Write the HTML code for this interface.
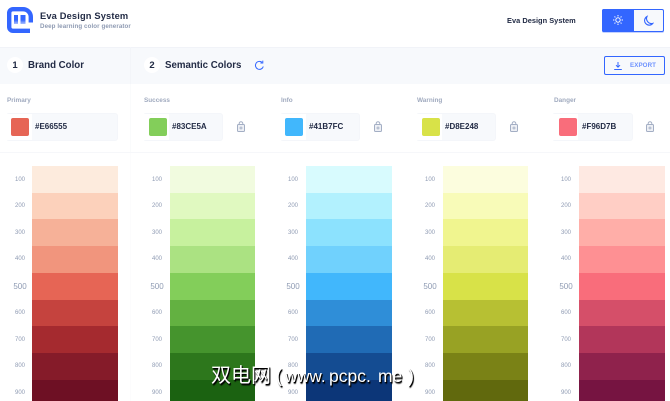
<!DOCTYPE html>
<html><head><meta charset="utf-8">
<style>
html,body{margin:0;padding:0;background:#fff}
#p{position:relative;width:670px;height:401px;overflow:hidden;background:#fff;font-family:"Liberation Sans",sans-serif;color:#222b45}
#p div,#p span,#p svg{position:absolute}
.t{white-space:nowrap;line-height:1}
.lab{font-size:6.4px;color:#8f9bb3;font-weight:700;top:98px;opacity:.85}
.box{top:114px;height:26px;background:#f7f9fc;border-radius:2px;box-shadow:0 0 0 1px #f4f6fa}
.sw{top:118px;width:18px;height:18px;border-radius:2px}
.hex{top:123px;font-size:8px;font-weight:700;color:#222b45}
.n{font-size:6px;color:#8f9bb3;width:24px;text-align:center;margin-top:1px}
.c{border-radius:50%;background:#fff;width:16px;height:16px;top:57px;font-size:9.5px;font-weight:700;text-align:center;line-height:17px}
.h{top:61px;font-size:9.7px;font-weight:700;color:#222b45}
.w{color:#fff;text-shadow:1px 1px 0 #000,1px 2px 1px rgba(0,0,0,.8);white-space:nowrap;line-height:1}
</style></head><body><div id="p">

<div style="left:0;top:47px;width:670px;height:37px;background:#f7f9fc;border-top:1px solid #f1f3f8;box-sizing:border-box"></div>
<div style="left:130px;top:47px;width:1px;height:37px;background:#f3f5f9"></div>
<div style="left:130px;top:84px;width:1px;height:68px;background:#fafbfc"></div>
<div style="left:0;top:152px;width:670px;height:1px;background:#f6f7fa"></div>
<div style="left:130px;top:153px;width:1px;height:248px;background:#fcfcfd"></div>

<svg style="left:7px;top:7px" width="27" height="27" viewBox="0 0 27 27">
<defs><linearGradient id="g" x1="0" y1="0" x2="0" y2="1"><stop offset="0" stop-color="#3366ff"/><stop offset=".55" stop-color="#3366ff"/><stop offset="1" stop-color="#a9bfff"/></linearGradient></defs>
<path d="M23.8 15.5V10A7.8 7.8 0 0 0 16 2.2H6A3.8 3.8 0 0 0 2.2 6V20A3.8 3.8 0 0 0 6 23.8H23" fill="none" stroke="#3366ff" stroke-width="4.4"/>
<rect x="7" y="8" width="4" height="9" fill="url(#g)"/><rect x="13.5" y="8" width="5" height="9" fill="url(#g)"/>
</svg>
<div class="t" style="left:40px;top:12px;font-size:9.3px;font-weight:700;letter-spacing:.15px">Eva Design System</div>
<div class="t" style="left:40px;top:24px;font-size:6.2px;font-weight:700;color:#8f9bb3;letter-spacing:.1px">Deep learning color generator</div>
<div class="t" style="left:507px;top:17px;font-size:7.4px;font-weight:700;color:#222b45;letter-spacing:.03px">Eva Design System</div>

<div style="left:602px;top:9px;width:62px;height:23px;box-sizing:border-box;border:1px solid #3366ff;border-radius:2px;background:#f7f9fc;box-shadow:0 1px 0 #c3d1ff"></div>
<div style="left:602px;top:9px;width:32px;height:23px;background:#3366ff;border-radius:2px 0 0 2px"></div>
<svg style="left:612px;top:14px" width="12" height="12" viewBox="0 0 12 12" fill="none" stroke="#fff" stroke-width="1">
<circle cx="6" cy="6" r="2.2"/><path d="M6 1V2.4M6 9.6V11M1 6H2.4M9.6 6H11M2.5 2.5L3.4 3.4M8.6 8.6L9.5 9.5M2.5 9.5L3.4 8.6M8.6 3.4L9.5 2.5"/></svg>
<svg style="left:642px;top:15px" width="12" height="12" viewBox="0 0 12 12" fill="none" stroke="#3366ff" stroke-width="1.1">
<path d="M5 1.5A4.6 4.6 0 1 0 10.8 8.4A5 5 0 0 1 5 1.5Z"/></svg>

<div class="c" style="left:7px">1</div>
<div class="t h" style="left:28px">Brand Color</div>
<div class="c" style="left:144px">2</div>
<div class="t h" style="left:165px">Semantic Colors</div>
<svg style="left:254px;top:60px" width="11" height="11" viewBox="0 0 11 11" fill="none" stroke="#3366ff" stroke-width="1">
<path d="M9.3 6.5A4 4 0 1 1 8 2.3"/><path d="M8.8 .6V3H6.4" /></svg>

<div style="left:604px;top:56px;width:61px;height:19px;box-sizing:border-box;border:1px solid #3366ff;border-radius:2px"></div>
<svg style="left:613px;top:61px" width="10" height="10" viewBox="0 0 10 10" fill="none" stroke="#3366ff" stroke-width="1">
<path d="M5 1V6M3 4.2L5 6.2L7 4.2M1.2 8.5H8.8"/></svg>
<div class="t" style="left:630px;top:62px;padding-top:0;font-size:6.2px;line-height:6px;font-weight:700;color:#3366ff;opacity:.7;letter-spacing:.1px;transform:translateY(1px)">EXPORT</div>

<div class="t lab" style="left:7px">Primary</div>
<div class="box" style="left:7px;width:110px"></div><div style="left:6px;top:114px;width:26px;height:26px;background:#fff"></div>
<div class="sw" style="left:11px;background:#e66555"></div><div class="t hex" style="left:35px">#E66555</div>

<div class="t lab" style="left:144px">Success</div>
<div class="box" style="left:144px;width:78px"></div><div style="left:143px;top:114px;width:26px;height:26px;background:#fff"></div>
<div class="sw" style="left:149px;background:#83ce5a"></div><div class="t hex" style="left:172px">#83CE5A</div>

<div class="t lab" style="left:281px">Info</div>
<div class="box" style="left:281px;width:78px"></div><div style="left:280px;top:114px;width:26px;height:26px;background:#fff"></div>
<div class="sw" style="left:285px;background:#41b7fc"></div><div class="t hex" style="left:309px">#41B7FC</div>

<div class="t lab" style="left:417px">Warning</div>
<div class="box" style="left:417px;width:78px"></div><div style="left:416px;top:114px;width:26px;height:26px;background:#fff"></div>
<div class="sw" style="left:422px;background:#d8e248"></div><div class="t hex" style="left:445px">#D8E248</div>

<div class="t lab" style="left:554px">Danger</div>
<div class="box" style="left:553px;width:79px"></div><div style="left:552px;top:114px;width:26px;height:26px;background:#fff"></div>
<div class="sw" style="left:559px;background:#f96d7b"></div><div class="t hex" style="left:582px">#F96D7B</div>

<svg style="left:236px;top:121px" width="10" height="11" viewBox="0 0 10 11" fill="#eef0f5" stroke="#a3aec4"><rect x="1.5" y="3.5" width="7" height="7" rx="1"/><path d="M3.2 3.5V2.5A1.8 1.8 0 0 1 6.8 2.5V3.5" fill="none"/><circle cx="5" cy="7" r="1" fill="none" stroke-width=".8"/></svg>
<svg style="left:373px;top:121px" width="10" height="11" viewBox="0 0 10 11" fill="#eef0f5" stroke="#a3aec4"><rect x="1.5" y="3.5" width="7" height="7" rx="1"/><path d="M3.2 3.5V2.5A1.8 1.8 0 0 1 6.8 2.5V3.5" fill="none"/><circle cx="5" cy="7" r="1" fill="none" stroke-width=".8"/></svg>
<svg style="left:509px;top:121px" width="10" height="11" viewBox="0 0 10 11" fill="#eef0f5" stroke="#a3aec4"><rect x="1.5" y="3.5" width="7" height="7" rx="1"/><path d="M3.2 3.5V2.5A1.8 1.8 0 0 1 6.8 2.5V3.5" fill="none"/><circle cx="5" cy="7" r="1" fill="none" stroke-width=".8"/></svg>
<svg style="left:645px;top:121px" width="10" height="11" viewBox="0 0 10 11" fill="#eef0f5" stroke="#a3aec4"><rect x="1.5" y="3.5" width="7" height="7" rx="1"/><path d="M3.2 3.5V2.5A1.8 1.8 0 0 1 6.8 2.5V3.5" fill="none"/><circle cx="5" cy="7" r="1" fill="none" stroke-width=".8"/></svg>

<!-- Primary -->
<div style="left:32px;top:166px;width:86px;height:27px;background:#fdebdd"></div>
<div style="left:32px;top:193px;width:86px;height:26px;background:#fcd1bb"></div>
<div style="left:32px;top:219px;width:86px;height:27px;background:#f6b198"></div>
<div style="left:32px;top:246px;width:86px;height:27px;background:#f1957d"></div>
<div style="left:32px;top:273px;width:86px;height:27px;background:#e66555"></div>
<div style="left:32px;top:300px;width:86px;height:26px;background:#c5433e"></div>
<div style="left:32px;top:326px;width:86px;height:27px;background:#a52a2f"></div>
<div style="left:32px;top:353px;width:86px;height:27px;background:#851b29"></div>
<div style="left:32px;top:380px;width:86px;height:21px;background:#6e1024"></div>
<!-- Success -->
<div style="left:170px;top:166px;width:85px;height:27px;background:#f1fbdf"></div>
<div style="left:170px;top:193px;width:85px;height:26px;background:#e0f9c0"></div>
<div style="left:170px;top:219px;width:85px;height:27px;background:#c7f19e"></div>
<div style="left:170px;top:246px;width:85px;height:27px;background:#abe282"></div>
<div style="left:170px;top:273px;width:85px;height:27px;background:#83ce5a"></div>
<div style="left:170px;top:300px;width:85px;height:26px;background:#63b141"></div>
<div style="left:170px;top:326px;width:85px;height:27px;background:#45942d"></div>
<div style="left:170px;top:353px;width:85px;height:27px;background:#2d771c"></div>
<div style="left:170px;top:380px;width:85px;height:21px;background:#1b6211"></div>
<!-- Info -->
<div style="left:306px;top:166px;width:86px;height:27px;background:#d8fbfe"></div>
<div style="left:306px;top:193px;width:86px;height:26px;background:#b2f1fe"></div>
<div style="left:306px;top:219px;width:86px;height:27px;background:#8ce2fe"></div>
<div style="left:306px;top:246px;width:86px;height:27px;background:#70d1fd"></div>
<div style="left:306px;top:273px;width:86px;height:27px;background:#41b7fc"></div>
<div style="left:306px;top:300px;width:86px;height:26px;background:#2f8ed8"></div>
<div style="left:306px;top:326px;width:86px;height:27px;background:#206bb5"></div>
<div style="left:306px;top:353px;width:86px;height:27px;background:#144c92"></div>
<div style="left:306px;top:380px;width:86px;height:21px;background:#0c3678"></div>
<!-- Warning -->
<div style="left:443px;top:166px;width:85px;height:27px;background:#fcfdde"></div>
<div style="left:443px;top:193px;width:85px;height:26px;background:#f8fbb8"></div>
<div style="left:443px;top:219px;width:85px;height:27px;background:#f0f58f"></div>
<div style="left:443px;top:246px;width:85px;height:27px;background:#e5ec73"></div>
<div style="left:443px;top:273px;width:85px;height:27px;background:#d8e248"></div>
<div style="left:443px;top:300px;width:85px;height:26px;background:#b7c033"></div>
<div style="left:443px;top:326px;width:85px;height:27px;background:#98a224"></div>
<div style="left:443px;top:353px;width:85px;height:27px;background:#7a8216"></div>
<div style="left:443px;top:380px;width:85px;height:21px;background:#61690d"></div>
<!-- Danger -->
<div style="left:579px;top:166px;width:86px;height:27px;background:#fee9e2"></div>
<div style="left:579px;top:193px;width:86px;height:26px;background:#ffcec5"></div>
<div style="left:579px;top:219px;width:86px;height:27px;background:#ffaea8"></div>
<div style="left:579px;top:246px;width:86px;height:27px;background:#fe9093"></div>
<div style="left:579px;top:273px;width:86px;height:27px;background:#f96d7b"></div>
<div style="left:579px;top:300px;width:86px;height:26px;background:#d54f69"></div>
<div style="left:579px;top:326px;width:86px;height:27px;background:#b2365a"></div>
<div style="left:579px;top:353px;width:86px;height:27px;background:#8f224c"></div>
<div style="left:579px;top:380px;width:86px;height:21px;background:#761441"></div>

<!-- Scale labels -->
<div class="t n" style="left:8px;top:176px">100</div><div class="t n" style="left:8px;top:202px">200</div><div class="t n" style="left:8px;top:229px">300</div><div class="t n" style="left:8px;top:255px">400</div><div class="t n" style="left:8px;top:282px;font-size:8px">500</div><div class="t n" style="left:8px;top:309px">600</div><div class="t n" style="left:8px;top:336px">700</div><div class="t n" style="left:8px;top:362px">800</div><div class="t n" style="left:8px;top:389px">900</div>
<div class="t n" style="left:145px;top:176px">100</div><div class="t n" style="left:145px;top:202px">200</div><div class="t n" style="left:145px;top:229px">300</div><div class="t n" style="left:145px;top:255px">400</div><div class="t n" style="left:145px;top:282px;font-size:8px">500</div><div class="t n" style="left:145px;top:309px">600</div><div class="t n" style="left:145px;top:336px">700</div><div class="t n" style="left:145px;top:362px">800</div><div class="t n" style="left:145px;top:389px">900</div>
<div class="t n" style="left:281px;top:176px">100</div><div class="t n" style="left:281px;top:202px">200</div><div class="t n" style="left:281px;top:229px">300</div><div class="t n" style="left:281px;top:255px">400</div><div class="t n" style="left:281px;top:282px;font-size:8px">500</div><div class="t n" style="left:281px;top:309px">600</div><div class="t n" style="left:281px;top:336px">700</div><div class="t n" style="left:281px;top:362px">800</div><div class="t n" style="left:281px;top:389px">900</div>
<div class="t n" style="left:418px;top:176px">100</div><div class="t n" style="left:418px;top:202px">200</div><div class="t n" style="left:418px;top:229px">300</div><div class="t n" style="left:418px;top:255px">400</div><div class="t n" style="left:418px;top:282px;font-size:8px">500</div><div class="t n" style="left:418px;top:309px">600</div><div class="t n" style="left:418px;top:336px">700</div><div class="t n" style="left:418px;top:362px">800</div><div class="t n" style="left:418px;top:389px">900</div>
<div class="t n" style="left:554px;top:176px">100</div><div class="t n" style="left:554px;top:202px">200</div><div class="t n" style="left:554px;top:229px">300</div><div class="t n" style="left:554px;top:255px">400</div><div class="t n" style="left:554px;top:282px;font-size:8px">500</div><div class="t n" style="left:554px;top:309px">600</div><div class="t n" style="left:554px;top:336px">700</div><div class="t n" style="left:554px;top:362px">800</div><div class="t n" style="left:554px;top:389px">900</div>

<!-- Watermark -->
<div class="w" style="left:211px;top:366px;font-size:20px;font-family:'Liberation Sans','Noto Sans CJK SC',sans-serif">双电网</div>
<div class="w" style="left:276px;top:367px;font-size:18px;font-family:'Liberation Sans',sans-serif">(</div>
<div class="w" style="left:285px;top:368px;font-size:17px;font-family:'Liberation Sans',sans-serif">www.</div>
<div class="w" style="left:329px;top:368px;font-size:17.5px;font-family:'Liberation Sans',sans-serif">pcpc.</div>
<div class="w" style="left:378px;top:368px;font-size:17.5px;font-family:'Liberation Sans',sans-serif">me</div>
<div class="w" style="left:408px;top:367px;font-size:18px;font-family:'Liberation Sans',sans-serif">)</div>
</div></body></html>
